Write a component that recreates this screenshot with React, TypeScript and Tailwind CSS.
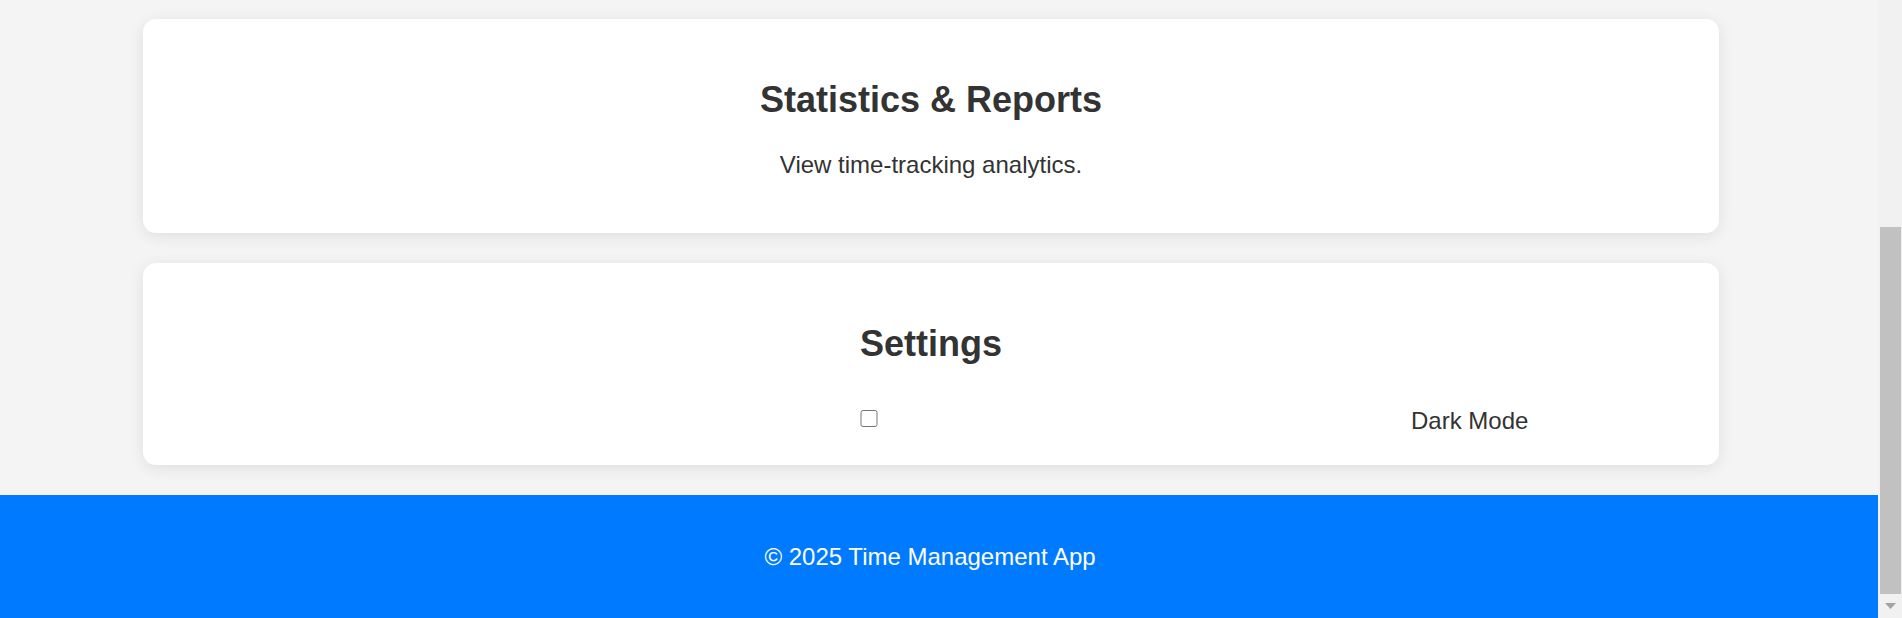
import React from 'react';

const font = { fontFamily: '"Liberation Sans", Arial, sans-serif' };

const Card: React.FC<{ className?: string; children: React.ReactNode }> = ({ className = '', children }) => (
  <section
    className={`ml-[143px] w-[1576px] rounded-[13px] bg-white p-[30px] text-center text-[#333] shadow-[0_3px_16px_rgba(0,0,0,0.09)] ${className}`}
  >
    {children}
  </section>
);

const ScrollBar: React.FC = () => (
  <div className="flex w-[24px] shrink-0 flex-col bg-[#f1f1f1]">
    <div className="ml-[2px] mt-[227px] h-[367px] w-[21px] bg-[#c1c1c1]" />
    <div className="flex flex-1 items-center justify-center">
      <svg width="11" height="6" viewBox="0 0 11 6">
        <path d="M0 0 H11 L5.5 6 Z" fill="#a3a3a3" />
      </svg>
    </div>
  </div>
);

const App: React.FC = () => {
  return (
    <div className="flex h-[618px] w-[1902px] overflow-hidden" style={font}>
      <div className="flex flex-1 flex-col bg-[#f4f4f4]">
        <div className="pt-[19px]">
          <Card className="h-[214px]">
            <h2 className="my-[30px] text-[36px] font-bold leading-[42px]">Statistics &amp; Reports</h2>
            <p className="text-[24px] leading-[28px]">View time-tracking analytics.</p>
          </Card>

          <Card className="mt-[30px] h-[202px]">
            <h2 className="mt-[30px] text-[36px] font-bold leading-[42px]">Settings</h2>
            <label className="mt-[42px] flex items-start text-[24px] leading-[28px]">
              <input
                type="checkbox"
                className="ml-[687px] mt-[3px] h-[17px] w-[18px] shrink-0"
              />
              <span className="ml-[533px]">Dark Mode</span>
            </label>
          </Card>
        </div>

        <footer className="mt-[30px] h-[123px] bg-[#007bff] pr-[18px] pt-[48px] text-center text-[24px] leading-[28px] text-white">
          © 2025 Time Management App
        </footer>
      </div>
      <ScrollBar />
    </div>
  );
};

export default App;
